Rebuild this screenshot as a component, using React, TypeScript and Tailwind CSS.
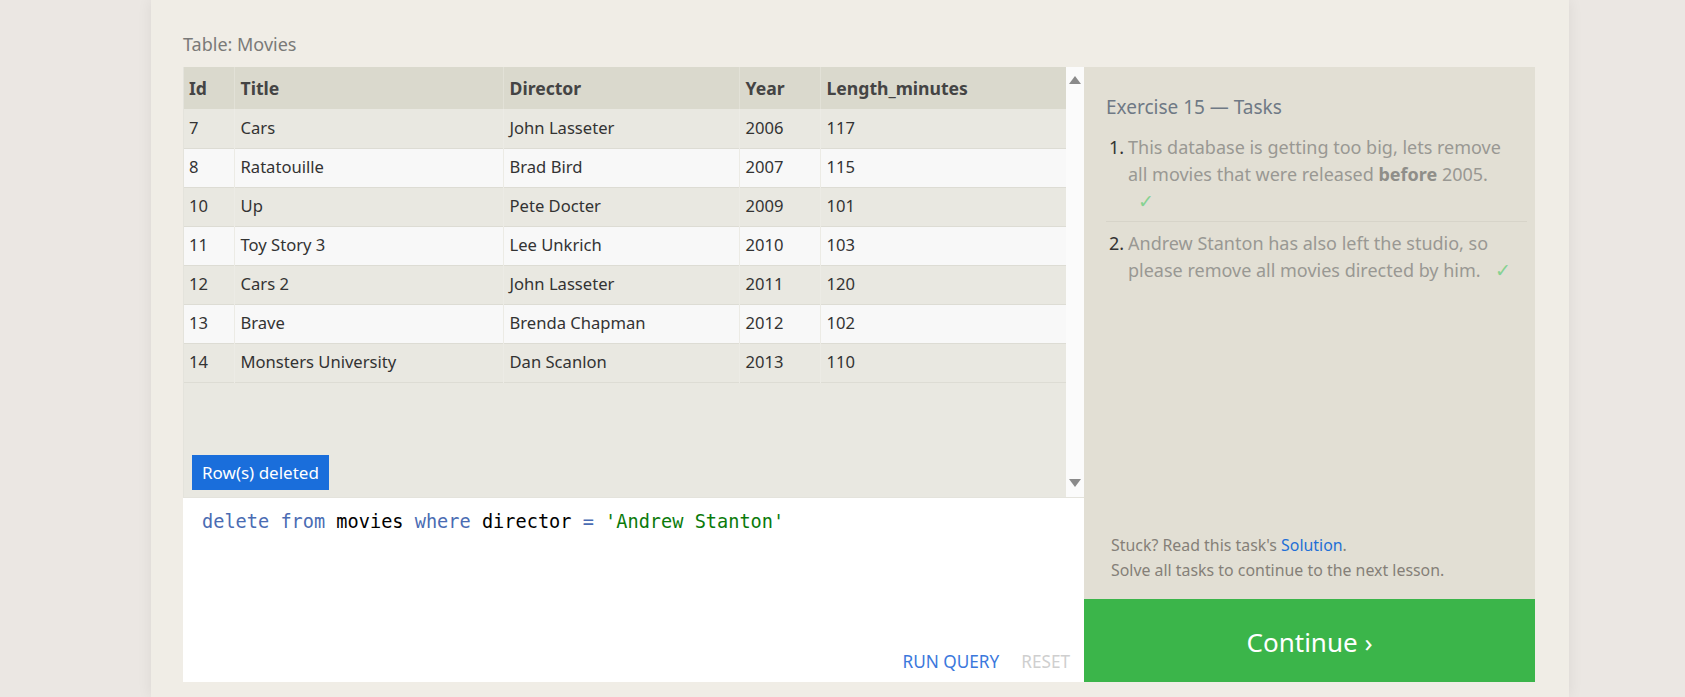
import React from 'react';

const rows = [
  { id: 7, title: 'Cars', director: 'John Lasseter', year: 2006, length: 117 },
  { id: 8, title: 'Ratatouille', director: 'Brad Bird', year: 2007, length: 115 },
  { id: 10, title: 'Up', director: 'Pete Docter', year: 2009, length: 101 },
  { id: 11, title: 'Toy Story 3', director: 'Lee Unkrich', year: 2010, length: 103 },
  { id: 12, title: 'Cars 2', director: 'John Lasseter', year: 2011, length: 120 },
  { id: 13, title: 'Brave', director: 'Brenda Chapman', year: 2012, length: 102 },
  { id: 14, title: 'Monsters University', director: 'Dan Scanlon', year: 2013, length: 110 },
];

function Check({ className }: { className?: string }) {
  return <span className={`text-[#86d291] text-[19px] ${className ?? ''}`}>✓</span>;
}

export default function App() {
  return (
    <div className="min-h-screen w-full bg-[#ebe7e3] font-['Noto_Sans',sans-serif] overflow-hidden">
      <div className="ml-[151px] w-[1418px] min-h-[697px] bg-[#f0ede6] shadow-[0_0_14px_rgba(0,0,0,0.07)] pl-[32px] pr-[34px] pt-[33px]">
        <div className="h-[22px] leading-[22px] text-[18px] text-[#7a7a78] mb-[12px]">Table: Movies</div>

        <div className="flex h-[615px]">
          {/* query panel */}
          <div className="flex flex-col w-[901px]">
            <div className="flex h-[430px]">
              <div className="flex flex-col w-[883px] bg-[#e9e8e1] border-l border-[#e4e3dc]">
                <table className="table-fixed w-full border-collapse text-[16.6px]">
                  <colgroup>
                    <col className="w-[50px]" />
                    <col className="w-[269px]" />
                    <col className="w-[236px]" />
                    <col className="w-[81px]" />
                    <col className="w-[247px]" />
                  </colgroup>
                  <thead>
                    <tr className="h-[42px] bg-[#dad9cd] text-[#444] text-left text-[17.6px]">
                      <th className="pl-[5px] font-bold border-r border-[#e2e1d7]">Id</th>
                      <th className="pl-[6px] font-bold border-r border-[#e2e1d7]">Title</th>
                      <th className="pl-[6px] font-bold border-r border-[#e2e1d7]">Director</th>
                      <th className="pl-[6px] font-bold border-r border-[#e2e1d7]">Year</th>
                      <th className="pl-[6px] font-bold">Length_minutes</th>
                    </tr>
                  </thead>
                  <tbody>
                    {rows.map((r, i) => (
                      <tr
                        key={r.id}
                        className={`h-[39px] text-[#333] border-b border-[#dddcd4] ${
                          i % 2 === 0 ? 'bg-[#e9e8e1]' : 'bg-[#f8f8f8]'
                        }`}
                      >
                        <td className="pl-[5px] border-r border-[#ecebe5]">{r.id}</td>
                        <td className="pl-[6px] border-r border-[#ecebe5]">{r.title}</td>
                        <td className="pl-[6px] border-r border-[#ecebe5]">{r.director}</td>
                        <td className="pl-[6px] border-r border-[#ecebe5]">{r.year}</td>
                        <td className="pl-[6px]">{r.length}</td>
                      </tr>
                    ))}
                  </tbody>
                </table>
                <div className="flex-1" />
                <div className="ml-[8px] mb-[7px] self-start h-[35px] leading-[35px] px-[10px] bg-[#1a6edb] text-white text-[17px]">
                  Row(s) deleted
                </div>
              </div>
              {/* scrollbar */}
              <div className="w-[18px] bg-[#fbfbfb] flex flex-col justify-between items-center pt-[9px] pb-[10px]">
                <div className="w-0 h-0 border-l-[6px] border-r-[6px] border-b-[8px] border-l-transparent border-r-transparent border-b-[#8a8a8a]" />
                <div className="w-0 h-0 border-l-[6px] border-r-[6px] border-t-[8px] border-l-transparent border-r-transparent border-t-[#8a8a8a]" />
              </div>
            </div>

            {/* editor */}
            <div className="flex flex-col h-[185px] bg-white border-t border-[#e4e3dc]">
              <div className="pl-[19px] pt-[12px] leading-[24px] text-[18.6px] font-['DejaVu_Sans_Mono',monospace] whitespace-pre">
                <span className="text-[#4a6cb3]">delete</span> <span className="text-[#4a6cb3]">from</span>{' '}
                <span className="text-black">movies</span> <span className="text-[#4a6cb3]">where</span>{' '}
                <span className="text-black">director</span> <span className="text-[#4a6cb3]">=</span>{' '}
                <span className="text-[#0a7a0a]">'Andrew Stanton'</span>
              </div>
              <div className="flex-1" />
              <div className="flex justify-end items-center gap-[22px] pr-[14px] pb-[8px] h-[32px] text-[17.2px] leading-[24px]">
                <span className="text-[#3b78dc]">RUN QUERY</span>
                <span className="text-[#cfcfcf]">RESET</span>
              </div>
            </div>
          </div>

          {/* tasks panel */}
          <div className="flex flex-col w-[451px] bg-[#e2dfd4]">
            <div className="flex-1 pl-[22px] pr-[8px] pt-[28px]">
              <div className="h-[24px] leading-[24px] text-[19px] text-[#6f7985]">Exercise 15 — Tasks</div>
              <ol className="mt-[15px] text-[18px] leading-[27px] text-[#999893]">
                <li className="flex pb-[6px] border-b border-[#d7d4c9]">
                  <span className="w-[22px] shrink-0 pl-[3px] text-[#333]">1.</span>
                  <span className="whitespace-nowrap">
                    This database is getting too big, lets remove
                    <br />
                    all movies that were released <b className="font-bold text-[#8f8e89]">before</b> 2005.
                    <br />
                    <Check className="ml-[10px]" />
                  </span>
                </li>
                <li className="flex pt-[8px]">
                  <span className="w-[22px] shrink-0 pl-[3px] text-[#333]">2.</span>
                  <span className="whitespace-nowrap">
                    Andrew Stanton has also left the studio, so
                    <br />
                    please remove all movies directed by him. <Check className="ml-[10px]" />
                  </span>
                </li>
              </ol>
            </div>
            <div className="pl-[27px] pb-[16px] text-[15.9px] leading-[25px] text-[#857f78]">
              <div>
                Stuck? Read this task's <span className="text-[#1f6fd6]">Solution</span>.
              </div>
              <div>Solve all tasks to continue to the next lesson.</div>
            </div>
            <div className="h-[83px] bg-[#3bb54a] flex items-center justify-center pt-[4px] text-white text-[26px]">
              Continue ›
            </div>
          </div>
        </div>
      </div>
    </div>
  );
}
